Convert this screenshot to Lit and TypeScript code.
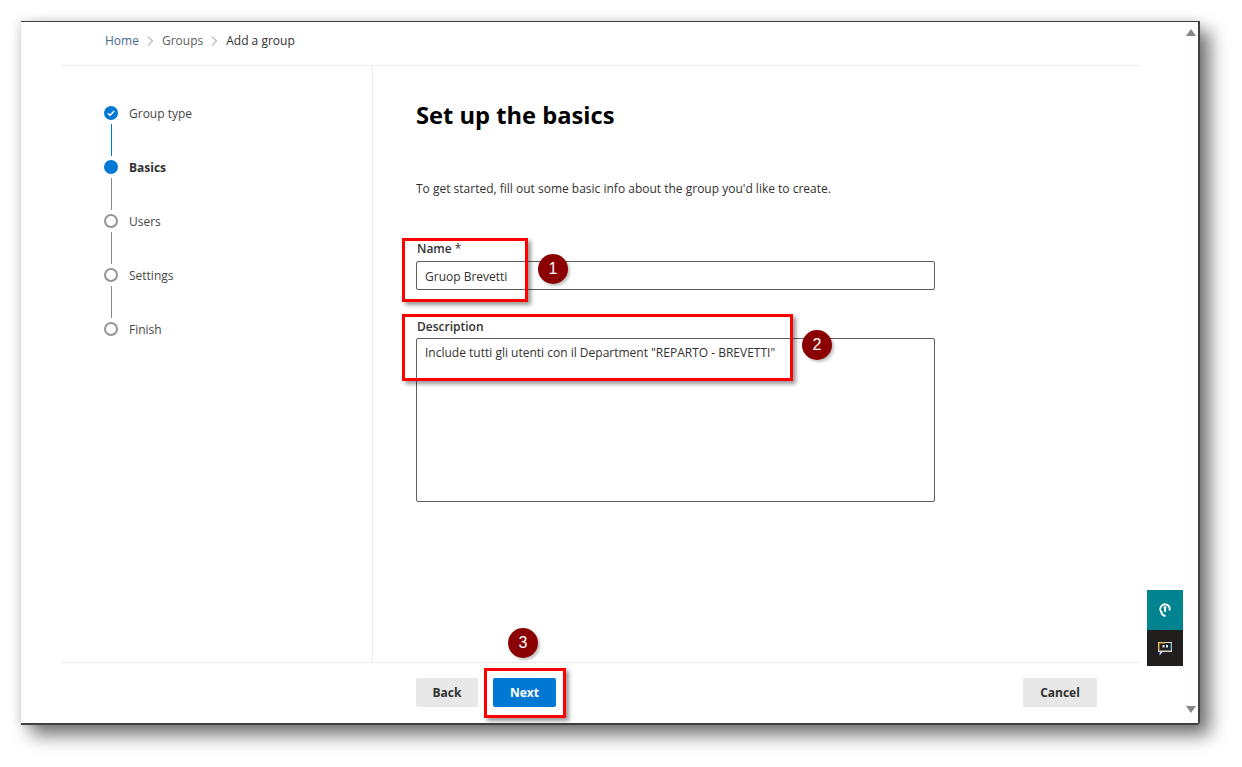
import { LitElement, html, css } from "lit";
import { customElement } from "lit/decorators.js";

const steps = [
  { label: "Group type", state: "done" },
  { label: "Basics", state: "current" },
  { label: "Users", state: "todo" },
  { label: "Settings", state: "todo" },
  { label: "Finish", state: "todo" },
];

@customElement("app-root")
export class AppRoot extends LitElement {
  static styles = css`
    :host { display: block; width: 1242px; height: 767px; background: #fff; overflow: hidden; font-family: "Open Sans", "Noto Sans", sans-serif; color: #323130; font-size: 12px; }
    * { box-sizing: border-box; }
    .stage { padding: 21px 42px 0 21px; height: 767px; }
    .window { position: relative; width: 1179px; height: 704px; background: #fff; border-top: 1px solid #404040; border-right: 2px solid #404040; border-bottom: 2px solid #404040; border-bottom-right-radius: 4px; box-shadow: 10px 10px 18px rgba(0,0,0,.55), -2px 0 10px rgba(0,0,0,.12); display: flex; }
    .page { width: 1162px; height: 100%; padding: 0 0 0 40px; display: flex; flex-direction: column; }
    .scroll { flex: 1; background: #fdfdfd; display: flex; flex-direction: column; justify-content: space-between; align-items: center; padding: 7px 0 10px; }
    .arrow { width: 0; height: 0; border-left: 5px solid transparent; border-right: 5px solid transparent; }
    .up { border-bottom: 7px solid #868686; }
    .down { border-top: 7px solid #868686; }
    .inner { width: 1079px; flex: 1; display: flex; flex-direction: column; }
    .crumbs { height: 44px; border-bottom: 1px solid #edebe9; padding: 0 0 6px 44px; display: flex; align-items: center; color: #605e5c; }
    .crumbs svg { margin: 0 8px; }
    .crumbs .now { color: #323130; }
    .crumbs .home { color: #486991; }
    .body { flex: 1; display: flex; min-height: 0; }
    .side { width: 312px; border-right: 1px solid #edebe9; padding: 38px 0 0 43px; }
    .step { display: flex; height: 54px; gap: 11px; position: relative; }
    .dot { width: 14px; height: 14px; border-radius: 50%; margin-top: 2px; flex: none; display: flex; align-items: center; justify-content: center; }
    .done .dot, .current .dot { background: #0078d4; }
    .todo .dot { border: 2px solid #979593; background: #fff; }
    .line { position: absolute; left: 6.5px; top: 20px; width: 1px; height: 32px; background: #8a8886; }
    .done .line { background: #0078d4; }
    .step-label { line-height: 18px; margin-top: 1px; color: #484644; }
    .current .step-label { font-weight: 700; color: #323130; }
    .main { flex: 1; padding: 32px 0 0 43px; }
    h1 { margin: 0; font-size: 23.7px; line-height: 34px; font-weight: 700; color: #000; }
    .intro { margin: 48px 0 0; line-height: 18px; color: #323130; }
    .label { display: block; font-weight: 600; line-height: 16px; color: #323130; padding-left: 1px; }
    .name-label { margin-top: 43px; }
    .req { font-weight: 400; }
    .input { width: 519px; height: 29px; margin-top: 4px; border: 1px solid #605e5c; border-radius: 2px; padding: 1px 8px 0; display: flex; align-items: center; color: #323130; }
    .desc-label { margin-top: 29px; }
    .area { width: 519px; height: 164px; margin-top: 3px; border: 1px solid #605e5c; border-radius: 2px; padding: 5px 8px; line-height: 18px; color: #323130; }
    .footer { height: 61px; border-top: 1px solid #edebe9; padding: 15px 43px 0 355px; display: flex; gap: 15px; }
    .btn { height: 29px; border: 0; border-radius: 2px; background: #e8e8e8; color: #323130; font: 700 12px "Open Sans", sans-serif; display: flex; align-items: center; justify-content: center; }
    .back { width: 62px; }
    .next { width: 63px; background: #0078d4; color: #fff; }
    .cancel { width: 74px; margin-left: auto; }
    .note { position: absolute; border: 3px solid #f00; box-shadow: 3px 3px 4px rgba(0,0,0,.4); }
    .n1 { left: 381px; top: 216px; width: 126px; height: 64px; }
    .n2 { left: 381px; top: 292px; width: 391px; height: 67px; }
    .n3 { left: 463px; top: 646px; width: 82px; height: 50px; }
    .badge { position: absolute; width: 30px; height: 30px; border-radius: 50%; background: #8b0000; color: #fff; font: 400 16px "Liberation Sans", sans-serif; display: flex; align-items: center; justify-content: center; box-shadow: 2px 2px 3px rgba(0,0,0,.25); }
    .b1 { left: 517px; top: 232px; }
    .b2 { left: 781px; top: 308px; }
    .b3 { left: 487px; top: 606px; }
    .widgets { position: absolute; left: 1126px; top: 568px; width: 36px; }
    .w1 { height: 40px; background: #028390; display: flex; align-items: center; justify-content: center; }
    .w2 { height: 36px; background: #201f1e; display: flex; align-items: center; justify-content: center; }
  `;

  render() {
    return html`
      <div class="stage">
        <div class="window">
          <div class="page">
            <div class="inner">
              <div class="crumbs">
                <span class="home">Home</span>
                ${this.chevron()}
                <span>Groups</span>
                ${this.chevron()}
                <span class="now">Add a group</span>
              </div>
              <div class="body">
                <div class="side">
                  ${steps.map(
                    (s, i) => html`
                      <div class="step ${s.state}">
                        <div class="dot">
                          ${s.state === "done"
                            ? html`<svg width="10" height="10" viewBox="0 0 10 10"><path d="M1.8 5.2 4 7.3 8.2 2.9" fill="none" stroke="#fff" stroke-width="1.5"/></svg>`
                            : ""}
                        </div>
                        ${i < steps.length - 1 ? html`<div class="line"></div>` : ""}
                        <div class="step-label">${s.label}</div>
                      </div>
                    `
                  )}
                </div>
                <div class="main">
                  <h1>Set up the basics</h1>
                  <p class="intro">To get started, fill out some basic info about the group you'd like to create.</p>
                  <label class="label name-label">Name <span class="req">*</span></label>
                  <div class="input">Gruop Brevetti</div>
                  <label class="label desc-label">Description</label>
                  <div class="area">Include tutti gli utenti con il Department "REPARTO - BREVETTI"</div>
                </div>
              </div>
              <div class="footer">
                <button class="btn back">Back</button>
                <button class="btn next">Next</button>
                <button class="btn cancel">Cancel</button>
              </div>
            </div>
          </div>
          <div class="scroll"><div class="arrow up"></div><div class="arrow down"></div></div>

          <div class="note n1"></div>
          <div class="note n2"></div>
          <div class="note n3"></div>
          <div class="badge b1">1</div>
          <div class="badge b2">2</div>
          <div class="badge b3">3</div>

          <div class="widgets">
            <div class="w1">
              <svg width="12" height="16" viewBox="0 0 12 16"><path d="M3 10.500A4.600 4.600 0 1 1 10.300 8.500" fill="none" stroke="#fff" stroke-width="1.800"/><path d="M2.200 9.500C2.600 12 4 13.800 6.500 14" fill="none" stroke="#fff" stroke-width="2"/><path d="M4.300 5.600 6 3.800 7.700 5.600 7 6.300V10H5V6.300z" fill="#fff"/></svg>
            </div>
            <div class="w2">
              <svg width="16" height="15" viewBox="0 0 16 15"><rect x="1" y="1" width="14" height="10" fill="#d8d4c8"/><rect x="2" y="2" width="12" height="7.500" fill="#201f1e"/><path d="M2 9V2h6" fill="none" stroke="#e8a317" stroke-width="1"/><path d="M14 2v7" stroke="#35a7e0" stroke-width="1"/><rect x="5.500" y="4" width="2" height="2.500" fill="#dfeaf2"/><rect x="9" y="4" width="2" height="2.500" fill="#dfeaf2"/><path d="M2.500 11v3.500l3-3.500z" fill="#fff"/><path d="M2 11v3l1.200-1.200V11z" fill="#2a5fdb"/></svg>
            </div>
          </div>
        </div>
      </div>
    `;
  }

  chevron() {
    return html`<svg width="7" height="10" viewBox="0 0 7 10"><path d="M1 .5 5.500 5 1 9.500" fill="none" stroke="#8a8886" stroke-width="1"/></svg>`;
  }
}
